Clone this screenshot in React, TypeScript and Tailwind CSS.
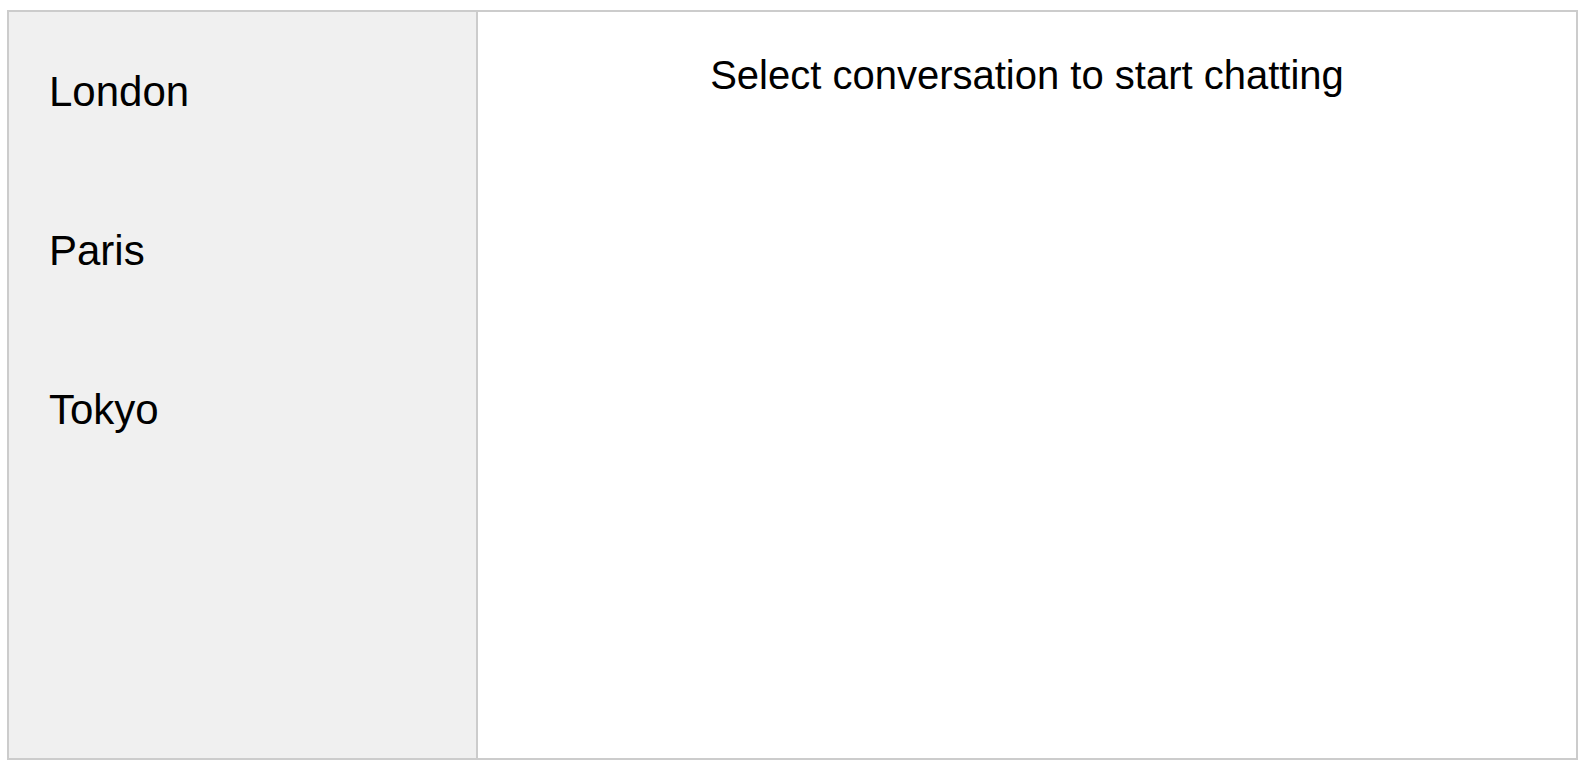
// App.tsx
export default function App() {
    const rooms = ["London", "Paris", "Tokyo"];

    return (
        <div className="min-h-screen bg-white pt-[10px] pl-[7px]" style={{ fontFamily: '"Liberation Sans", Arial, sans-serif' }}>
            <div className="flex w-[1571px] h-[750px] border-2 border-[#cccccc] text-black">
                {/* Sidebar */}
                <div className="w-[469px] shrink-0 bg-[#f0f0f0] border-r-2 border-[#cccccc] pl-[40px] pt-[56px]">
                    <div className="flex flex-col gap-[111px]">
                        {rooms.map((room) => (
                            <div key={room} className="text-[42px] leading-[48px] cursor-pointer">
                                {room}
                            </div>
                        ))}
                    </div>
                </div>

                {/* Chat area */}
                <div className="flex-1 pt-[40px]">
                    <div className="text-center text-[40px] leading-[46px]">
                        Select conversation to start chatting
                    </div>
                </div>
            </div>
        </div>
    );
}
